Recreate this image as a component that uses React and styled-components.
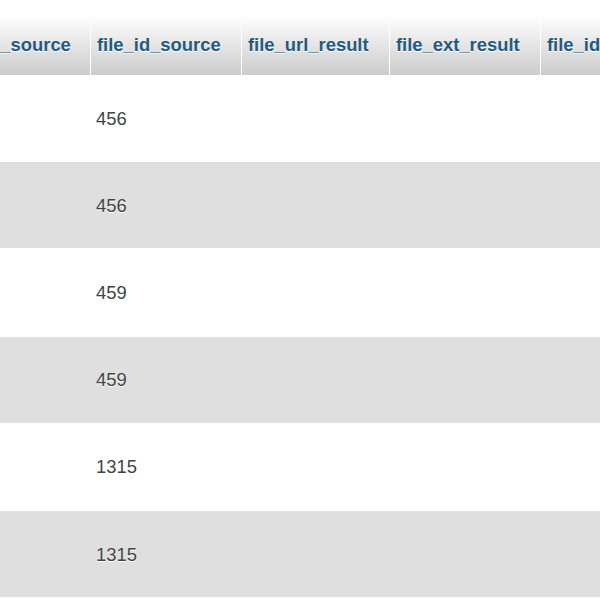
import React from "react";
import styled, { createGlobalStyle } from "styled-components";

const Global = createGlobalStyle`
  html, body { margin: 0; padding: 0; background: #fff; }
  body { font-family: "Liberation Sans", Arial, sans-serif; }
`;

const Viewport = styled.div`
  width: 600px;
  height: 600px;
  overflow: hidden;
  background: #fff;
`;

const Table = styled.table`
  margin: 15px 0 0 -66px;
  border-collapse: separate;
  border-spacing: 0;
  table-layout: fixed;
  width: 757px;
  font-family: "Liberation Sans", Arial, sans-serif;
  font-size: 18.4px;
`;

const HeadCell = styled.th`
  box-sizing: border-box;
  width: ${(p) => p.$w}px;
  height: 60px;
  padding: 0 6px;
  text-align: left;
  white-space: nowrap;
  overflow: hidden;
  font-weight: bold;
  color: #235a81;
  text-shadow: 0 1px 0 #fff;
  background: linear-gradient(#fff, #ccc);
  border-right: 1px solid #fff;
`;

const Row = styled.tr`
  background: ${(p) => (p.$even ? "#dfdfdf" : "#fff")};
`;

const Cell = styled.td`
  box-sizing: border-box;
  height: 87.2px;
  padding: 1px 5px 0;
  color: #444;
  text-shadow: 0 1px 0 #fff;
  border-bottom: 1px solid #fff;
  white-space: nowrap;
  vertical-align: middle;
`;

const columns = [
  { name: "file_url_source", w: 157 },
  { name: "file_id_source", w: 151 },
  { name: "file_url_result", w: 148 },
  { name: "file_ext_result", w: 151 },
  { name: "file_id_result", w: 150 },
];

const rows = ["456", "456", "459", "459", "1315", "1315"];

export default function App() {
  return (
    <>
      <Global />
      <Viewport>
        <Table>
          <thead>
            <tr>
              {columns.map((c) => (
                <HeadCell key={c.name} $w={c.w}>
                  {c.name}
                </HeadCell>
              ))}
            </tr>
          </thead>
          <tbody>
            {rows.map((v, i) => (
              <Row key={i} $even={i % 2 === 1}>
                <Cell />
                <Cell>{v}</Cell>
                <Cell />
                <Cell />
                <Cell />
              </Row>
            ))}
          </tbody>
        </Table>
      </Viewport>
    </>
  );
}
